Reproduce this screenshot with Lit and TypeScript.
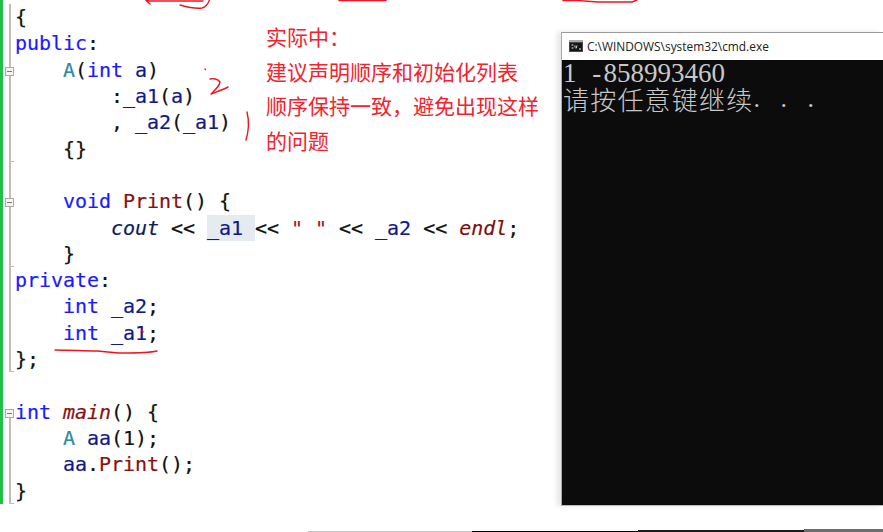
import { LitElement, html, css, svg } from "lit";
import { customElement } from "lit/decorators.js";

type Tok = [string, string?];
const L = (...t: Tok[]) => t;
const lines: { t: Tok[]; fold?: boolean; end?: boolean; noRail?: boolean; railFromFold?: boolean }[] = [
  { t: L(["{"]) },
  { t: L(["public", "kw"], [":"]) },
  { t: L(["    "], ["A", "ty"], ["("], ["int", "kw"], [" "], ["a", "id"], [")"]), fold: true },
  { t: L(["        :"], ["_a1", "id"], ["("], ["a", "id"], [")"]) },
  { t: L(["        , "], ["_a2", "id"], ["("], ["_a1", "id"], [")"]) },
  { t: L(["    {}"]), end: true },
  { t: L([" "]) },
  { t: L(["    "], ["void", "kw"], [" "], ["Print", "fn"], ["() {"]), fold: true },
  { t: L(["        "], ["cout", "it"], [" << "], ["_a1 ", "hl"], ["<< "], ['" "', "st"], [" << "], ["_a2", "id"], [" << "], ["endl", "it2"], [";"]) },
  { t: L(["    }"]), end: true },
  { t: L(["private", "kw"], [":"]) },
  { t: L(["    "], ["int", "kw"], [" "], ["_a2", "id"], [";"]) },
  { t: L(["    "], ["int", "kw"], [" "], ["_a1", "id"], [";"]) },
  { t: L(["};"]), end: true },
  { t: L([" "]), noRail: true },
  { t: L(["int", "kw"], [" "], ["main", "fi"], ["() {"]), fold: true, railFromFold: true },
  { t: L(["    "], ["A", "ty"], [" "], ["aa", "id"], ["(1);"]) },
  { t: L(["    "], ["aa", "id"], ["."], ["Print", "fn"], ["();"]) },
  { t: L(["}"]), end: true },
];

const cells = (s: string) => [...s].map((c) => html`<span class="cell">${c}</span>`);

@customElement("app-root")
export class AppRoot extends LitElement {
  static styles = css`
    :host { display: block; width: 883px; height: 532px; background: #fff; overflow: hidden; position: relative; }
    .top { display: flex; height: 506px; }
    .editor { width: 561px; flex: none; display: flex; }
    .green { width: 3px; height: 504px; background: #1fc14a; flex: none; }
    .gutter { width: 12px; flex: none; }
    .code { padding-top: 4px; font: 20px/26.32px "DejaVu Sans Mono", "Liberation Mono", monospace; letter-spacing: -0.04px; color: #111; -webkit-text-stroke: 0.2px currentColor; }
    .line { height: 26.32px; position: relative; white-space: pre; }
    .fold { position: absolute; left: -10px; top: 10px; width: 7px; height: 7px; border: 1px solid #aaa; background: #f4f4f4; }
    .fold::after { content: ""; position: absolute; left: 1px; right: 1px; top: 3px; height: 1px; background: #777; }
    .rail { position: absolute; left: -6px; top: 0; bottom: 0; width: 2px; background: #bdbdbd; }
    .rail.from-fold { top: 10px; }
    .tick { position: absolute; left: -6px; bottom: 0; width: 5px; height: 1px; background: #bdbdbd; }
    .kw { color: #1a1aff; }
    .ty { color: #2b8a9e; }
    .id { color: #0f1a8c; }
    .fn { color: #8a1010; }
    .fi { color: #8a1010; font-style: italic; }
    .it { color: #0f1a60; font-style: italic; }
    .it2 { color: #7a1010; font-style: italic; }
    .st { color: #a31515; }
    .hl { color: #0f1a8c; background: #e6ebf2; display: inline-block; height: 26.32px; }
    .note { position: absolute; left: 266px; top: 19px; color: #f2222e; font: 21px/34.5px "Noto Sans CJK SC", sans-serif; }
    .cmd-wrap { flex: 1; padding-top: 32px; }
    .cmd { height: 474px; border-left: 1px solid #aaa; border-top: 1px solid #9a9a9a; box-shadow: -4px 0 5px rgba(0,0,0,.1); display: flex; flex-direction: column; background: #fff; box-sizing: border-box; }
    .title { height: 26px; margin-bottom: 1px; flex: none; display: flex; align-items: center; gap: 4px; padding-left: 7px; font: 11.9px "Open Sans", "Liberation Sans", sans-serif; color: #222; }
    .term { flex: 1; background: #0c0c0c; color: #c8c8c8; padding-left: 1px; border-bottom: 1px solid #bbb; }
    .num { font: 27px/27px "Liberation Serif", serif; white-space: pre; height: 25px; }
    .zh { font: 26px/27px "Noto Sans CJK SC", serif; font-weight: 300; letter-spacing: 1.2px; white-space: pre; display: flex; }
    .cell { display: inline-block; width: 13.5px; text-align: center; letter-spacing: 0; }
    .dots .cell { text-align: left; }
    .dots { font: 26px/27px "Liberation Serif", serif; }
    .ink { position: absolute; left: 0; top: 0; pointer-events: none; }
    .bottom { display: grid; grid-template-columns: 308px 164px 166px 166px 1fr; height: 26px; align-items: end; }
    .seg { display: block; }
    .s1 { grid-column: 2; height: 1px; background: #c4c4c4; }
    .s2 { grid-column: 3; height: 1px; background: #000; }
    .s3 { grid-column: 4; height: 2px; background: #1a1a1a; }
    .s4 { grid-column: 5; height: 3px; background: #6e6e6e; }
  `;

  render() {
    return html`
      <div class="top">
        <div class="editor">
          <div class="green"></div>
          <div class="gutter"></div>
          <div class="code">
            ${lines.map((l) => html`<div class="line">${l.noRail ? "" : html`<span class="rail ${l.railFromFold ? "from-fold" : ""}"></span>`}${l.fold ? html`<span class="fold"></span>` : ""}${l.end ? html`<span class="tick"></span>` : ""}${l.t.map(([s, c]) => (c ? html`<span class=${c}>${s}</span>` : s))}</div>`)}
          </div>
        </div>
        <div class="cmd-wrap">
          <div class="cmd">
            <div class="title">
              <svg width="14" height="12" viewBox="0 0 14 12"><rect width="14" height="12" fill="#4a4a4a"/><rect width="14" height="2" fill="#a8a8a8"/><rect x="1" y="3" width="12" height="8" fill="#151515"/><path d="M2.5 5h2M2.5 8h2M6 5.5v2M8 5.5l-1 3M10 9h2" stroke="#e6e6e6" fill="none"/></svg>
              <span>C:\\WINDOWS\\system32\\cmd.exe</span>
            </div>
            <div class="term">
              <div class="num">${cells("1 -858993460")}</div>
              <div class="zh"><span>请按任意键继续</span><span class="dots">${cells(". . .")}</span></div>
            </div>
          </div>
        </div>
      </div>
      <div class="bottom">
        <i class="seg s1"></i><i class="seg s2"></i><i class="seg s3"></i><i class="seg s4"></i>
      </div>
      <div class="note">实际中：<br />建议声明顺序和初始化列表<br />顺序保持一致，避免出现这样<br />的问题</div>
      <svg class="ink" width="883" height="532" viewBox="0 0 883 532" fill="none" stroke="#f0141e" stroke-width="1.4" stroke-linecap="round" stroke-linejoin="round">
        ${svg`
          <path d="M150 4 L146 0.5 L150 1 H203"/>
          <path d="M180 5 C187 7 195 9 202 8 C206 7 208 4 209.5 0"/>
          <path d="M339 0.5 H386"/>
          <path d="M563 0.5 H578 L598 2 H632 L637 0"/>
          <path d="M205 69 L205.5 69.5"/>
          <path d="M210 79 C213 78 218 79 220 82 C219 87 214 91 211 94 C216 92 222 90 228 87"/>
          <path d="M247 112 C249 120 249 130 246 140"/>
          <path d="M55 350 C70 350 85 351 97 351 C108 352 115 353 123 353 C135 353 148 353 157 351"/>
          <path d="M142 330 L143 332"/>
        `}
      </svg>
    `;
  }
}
